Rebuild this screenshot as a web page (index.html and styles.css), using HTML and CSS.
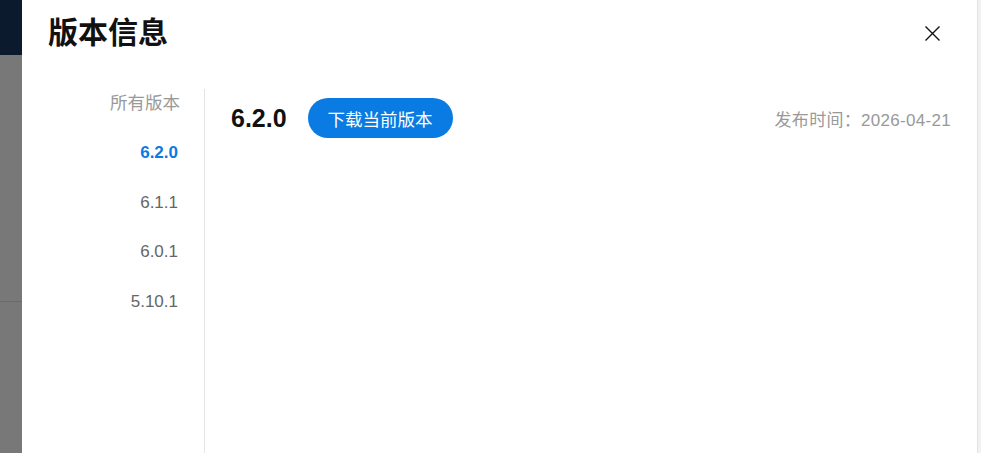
FILE: index.html
```html
<!DOCTYPE html>
<html lang="zh-CN">
<head>
  <meta charset="UTF-8">
  <meta name="viewport" content="width=device-width, initial-scale=1.0">
  <title>版本信息</title>
  <link rel="stylesheet" href="styles.css">
</head>
<body>
  <!-- page behind the drawer, dimmed by the mask -->
  <div class="backdrop">
    <div class="topbar"></div>
    <div class="page">
      <div class="page-line"></div>
    </div>
  </div>

  <div class="drawer">
    <div class="drawer-main">
      <header class="drawer-header">
        <h1 class="title">版本信息</h1>
        <button class="close" aria-label="关闭">
          <svg width="15" height="15" viewBox="0 0 15 15">
            <path d="M0.5 0.5 L14.5 14.5 M14.5 0.5 L0.5 14.5" stroke="#111" stroke-width="1.4" fill="none"/>
          </svg>
        </button>
      </header>
      <div class="drawer-body">
        <ul class="versions">
          <li class="versions-label">所有版本</li>
          <li class="active">6.2.0</li>
          <li>6.1.1</li>
          <li>6.0.1</li>
          <li>5.10.1</li>
        </ul>
        <div class="detail">
          <div class="detail-head">
            <span class="detail-version">6.2.0</span>
            <button class="download">下载当前版本</button>
            <span class="release-date">发布时间：2026-04-21</span>
          </div>
        </div>
      </div>
    </div>
    <div class="scroll-track"></div>
  </div>
</body>
</html>
```

FILE: styles.css
```css
/* Basic Reset */
* {
  margin: 0;
  padding: 0;
  box-sizing: border-box;
}
html, body {
  height: 100%;
  overflow: hidden;
}
body {
  font-family: "Liberation Sans", "Noto Sans CJK SC", sans-serif;
  background: #787878;
}
.backdrop {
  height: 100%;
  display: flex;
  flex-direction: column;
}
.topbar {
  height: 55px;
  background: #0b1a2c;
}
.page {
  flex: 1;
  padding-top: 246px;
}
.page-line {
  height: 1px;
  background: #6b6b6b;
}
.drawer {
  position: fixed;
  top: 0;
  bottom: 0;
  left: 22px;
  right: 0;
  background: #fff;
  display: flex;
}
.drawer-main {
  flex: 1;
  display: flex;
  flex-direction: column;
}
.scroll-track {
  width: 4px;
  background: #f1f1f1;
  border-left: 1px solid #e4e4e4;
}
.drawer-header {
  height: 66px;
  padding: 0 37px 0 26px;
  display: flex;
  align-items: center;
  justify-content: space-between;
}
.title {
  font-size: 30px;
  font-weight: bold;
  color: #111;
  line-height: 1;
}
.close {
  border: none;
  background: none;
  width: 15px;
  height: 15px;
  display: flex;
  cursor: pointer;
}
.drawer-body {
  flex: 1;
  margin-top: 23px;
  display: flex;
}
.versions {
  list-style: none;
  width: 183px;
  border-right: 1px solid #e4e4e4;
  padding: 1px 26px 0 0;
  text-align: right;
  display: flex;
  flex-direction: column;
  gap: 23.75px;
  font-size: 17px;
  color: #666;
}
.versions li {
  line-height: 26px;
  cursor: pointer;
}
.versions .versions-label {
  color: #999;
  font-size: 17.5px;
  margin-right: -2px;
  cursor: default;
}
.versions .active {
  color: #0a7be2;
  font-weight: bold;
}
.detail {
  flex: 1;
  padding: 9px 26px 0 26px;
}
.detail-head {
  display: flex;
  align-items: center;
}
.detail-version {
  font-size: 25px;
  font-weight: bold;
  color: #111;
}
.download {
  margin-left: 21px;
  height: 40px;
  padding: 0 20px;
  border: none;
  border-radius: 20px;
  background: #0a7be2;
  color: #fff;
  font-family: inherit;
  font-size: 17.5px;
  cursor: pointer;
}
.release-date {
  margin-left: auto;
  font-size: 17px;
  color: #999;
  letter-spacing: 0.3px;
}
```
